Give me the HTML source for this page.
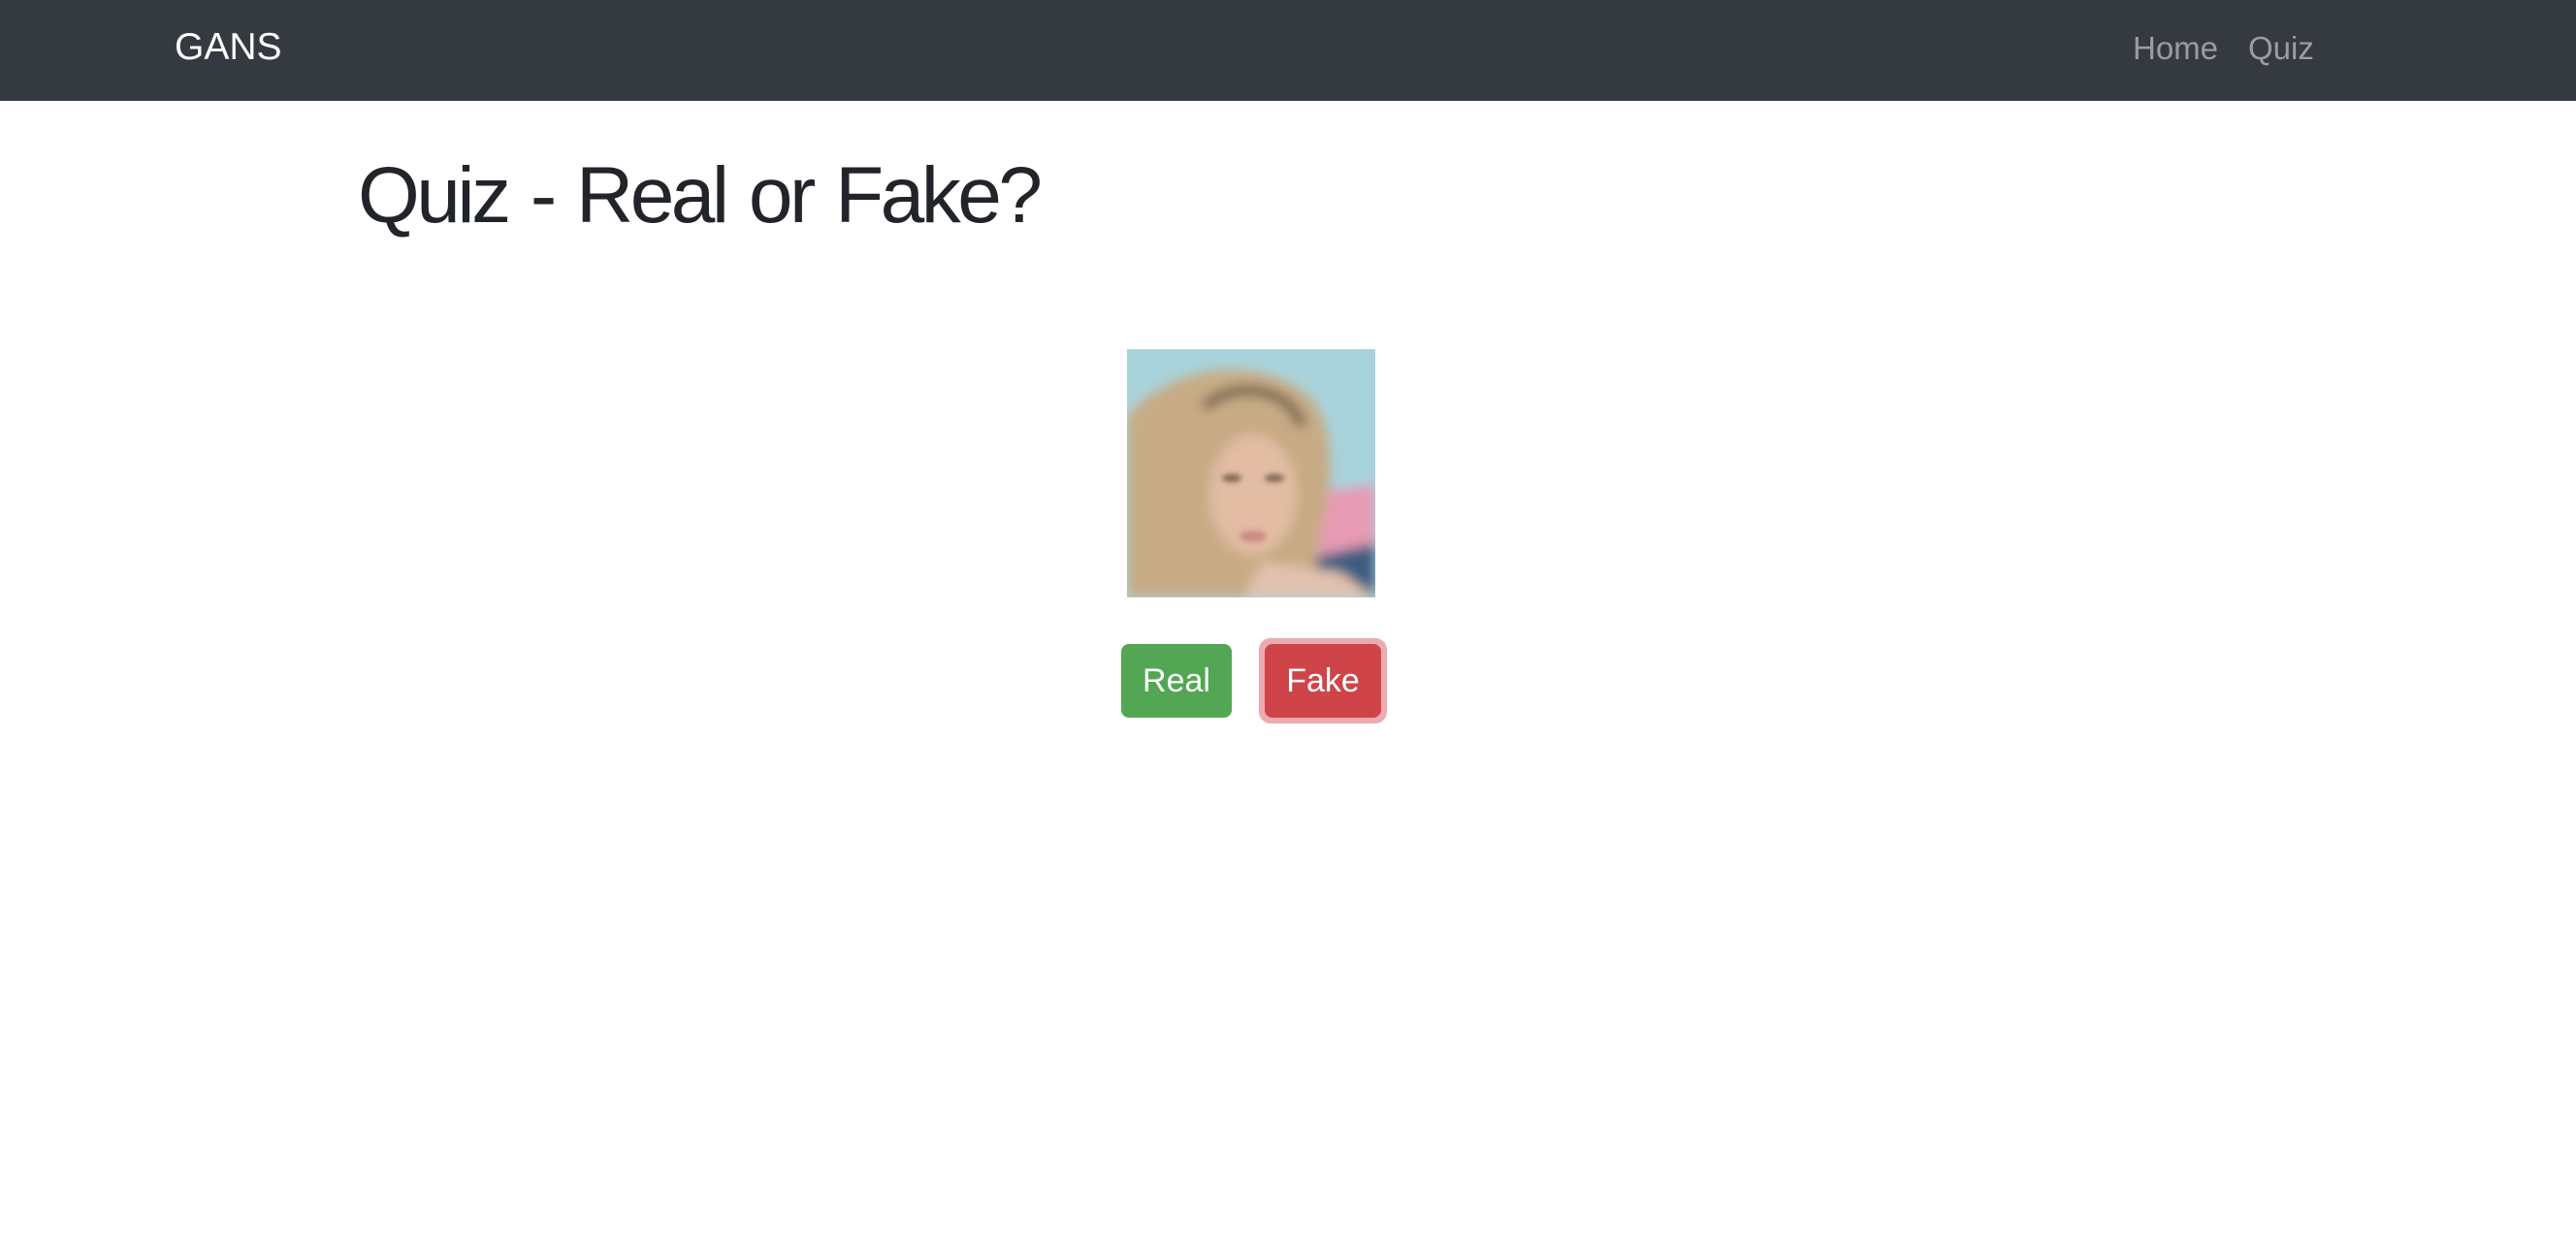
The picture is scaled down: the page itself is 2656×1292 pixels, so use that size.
<!DOCTYPE html>
<html><head><meta charset="utf-8"><style>
html,body{margin:0;padding:0;background:#fff;width:2656px;height:1292px;overflow:hidden;font-family:"Liberation Sans",Arial,sans-serif}
.nav{position:absolute;left:0;top:0;width:2656px;height:104px;background:#343a40}
.brand{position:absolute;left:180px;top:24px;font-size:39px;color:#fff;line-height:50px}
.link{position:absolute;top:28px;font-size:33px;color:#9a9da0;line-height:44px}
h1{position:absolute;left:369px;top:152px;margin:0;font-weight:400;font-size:82px;line-height:100px;color:#212529;letter-spacing:-3.5px;word-spacing:4px}
.img{position:absolute;left:1162px;top:360px;width:256px;height:256px}
.btn{position:absolute;top:664px;height:76px;border-radius:8px;color:#fff;font-size:34px;line-height:76px;text-align:center}
</style></head><body>
<div class="nav">
<div class="brand">GANS</div>
<div class="link" style="left:2199px">Home</div>
<div class="link" style="left:2318px">Quiz</div>
</div>
<h1>Quiz - Real or Fake?</h1>
<svg class="img" viewBox="0 0 256 256">
<defs><filter id="b"><feGaussianBlur stdDeviation="6"/></filter><filter id="s"><feGaussianBlur stdDeviation="3"/></filter></defs>
<rect width="256" height="256" fill="#a9d3dc"/>
<g filter="url(#b)">
<path d="M180 150 L256 140 L256 230 L200 230Z" fill="#e79ab4"/>
<path d="M170 220 L256 200 L256 256 L170 256Z" fill="#3d5d80"/>
<path d="M0 70 C40 20 130 0 190 50 C220 90 210 150 200 190 L190 256 L0 256Z" fill="#c7ab85"/>
<path d="M80 60 C110 30 170 40 180 80" stroke="#6b5a45" stroke-width="10" fill="none"/>
<ellipse cx="130" cy="150" rx="45" ry="62" fill="#e2bca3"/>
<path d="M140 220 L220 230 L256 256 L120 256Z" fill="#e2c2ae"/>
</g>
<g filter="url(#s)">
<ellipse cx="108" cy="133" rx="10" ry="4" fill="#7a6450"/>
<ellipse cx="152" cy="133" rx="10" ry="4" fill="#7a6450"/>
<ellipse cx="130" cy="193" rx="14" ry="6" fill="#c88a84"/>
</g>
</svg>
<div class="btn" style="left:1156px;width:114px;background:#53a653">Real</div>
<div class="btn" style="left:1298px;top:658px;width:132px;height:88px;border-radius:12px;background:#ebabb0"></div>
<div class="btn" style="left:1304px;width:120px;background:#cf4449">Fake</div>
</body></html>
